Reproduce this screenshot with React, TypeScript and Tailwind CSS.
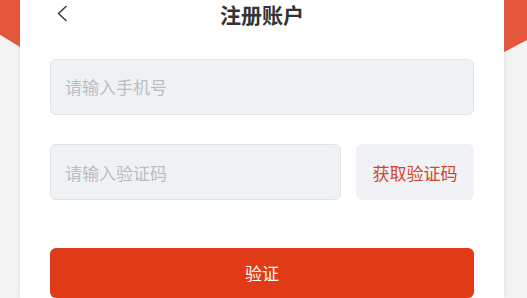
const font = "font-['Noto_Sans_CJK_SC','Noto_Sans',sans-serif]";

const App = () => {
  return (
    <div className={`flex w-[527px] h-[298px] overflow-hidden bg-[#f3f3f3] ${font}`}>
      <div className="w-[20px] shrink-0">
        <div className="h-[47px] bg-[#e5573c] [clip-path:polygon(0_0,100%_0,100%_100%,0_74%)]" />
      </div>
      <div className="flex flex-col w-[484px] shrink-0 h-full px-[30px] bg-white shadow-[0_0_4px_rgba(0,0,0,0.1)]">
        <div className="relative flex items-center justify-center h-[27px] pt-[1px]">
          <svg
            className="absolute left-[7px] top-[5px]"
            width="11"
            height="17"
            viewBox="0 0 11 17"
            fill="none"
          >
            <polyline points="9.5,1 1.5,8.5 9.5,16" stroke="#333" strokeWidth="1.4" />
          </svg>
          <span className="text-[21px] font-bold leading-[26px] text-[#333]">注册账户</span>
        </div>
        <div className="flex items-center h-[59px] mt-[32px] px-[14px] rounded-[6px] bg-[#eff2f5] border border-[#dfe3e8]">
          <span className="text-[17px] text-[#b9bdc3]">请输入手机号</span>
        </div>
        <div className="flex gap-[15px] mt-[29px] h-[59px]">
          <div className="flex items-center flex-1 px-[14px] rounded-[6px] bg-[#eff2f5] border border-[#dfe3e8]">
            <span className="text-[17px] text-[#b9bdc3]">请输入验证码</span>
          </div>
          <div className="flex items-center justify-center w-[118px] rounded-[6px] bg-[#f0f2f5]">
            <span className="text-[17px] text-[#d4442a]">获取验证码</span>
          </div>
        </div>
        <div className="flex items-center justify-center h-[52px] mt-[48px] rounded-[6px] bg-[#e03a16]">
          <span className="text-[17px] text-white">验证</span>
        </div>
      </div>
      <div className="flex-1">
        <div className="h-[52px] bg-[#e5573c] [clip-path:polygon(0_0,100%_0,100%_77%,0_100%)]" />
      </div>
    </div>
  );
};

export default App;
